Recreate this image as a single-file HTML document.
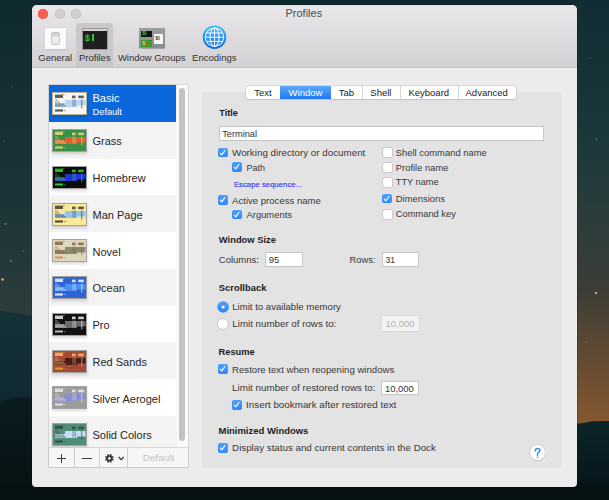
<!DOCTYPE html><html><head><meta charset="utf-8"><style>
*{box-sizing:border-box;margin:0;padding:0}
html,body{width:609px;height:500px;overflow:hidden;background:#1b3539;font-family:"Liberation Sans",sans-serif}
.a{position:absolute}
.t{position:absolute;white-space:nowrap;line-height:1;color:#262626}
.cb{position:absolute;width:9.6px;height:9.6px;border-radius:2px;background:linear-gradient(#4f9ffa,#3088f6)}
.cbo{position:absolute;width:9px;height:9px;border-radius:1.8px;background:#fff;box-shadow:0 0 0 0.8px #c3c3c3}
.fld{position:absolute;background:#fff;box-shadow:0 0 0 0.6px #b8b8b8;font-size:9.8px;color:#222;padding-left:3px}
</style></head><body>
<svg class="a" style="left:0;top:0" width="609" height="500" viewBox="0 0 609 500">
  <defs>
    <linearGradient id="skyL" x1="0" y1="0" x2="0" y2="500" gradientUnits="userSpaceOnUse">
      <stop offset="0" stop-color="#0f2a2e"/>
      <stop offset="0.4" stop-color="#1c3437"/>
      <stop offset="0.62" stop-color="#2c3c3c"/>
    </linearGradient>
    <linearGradient id="skyR" x1="0" y1="0" x2="0" y2="500" gradientUnits="userSpaceOnUse">
      <stop offset="0" stop-color="#122c33"/>
      <stop offset="0.28" stop-color="#1c383b"/>
      <stop offset="0.46" stop-color="#2e3d3b"/>
      <stop offset="0.58" stop-color="#3d3d36"/>
      <stop offset="0.84" stop-color="#84572f"/>
    </linearGradient>
    <linearGradient id="mtL" x1="0" y1="311" x2="0" y2="400" gradientUnits="userSpaceOnUse">
      <stop offset="0" stop-color="#143238"/>
      <stop offset="1" stop-color="#0f2a30"/>
    </linearGradient>
    <linearGradient id="mtR" x1="0" y1="421" x2="0" y2="500" gradientUnits="userSpaceOnUse">
      <stop offset="0" stop-color="#0c2529"/>
      <stop offset="1" stop-color="#06121a"/>
    </linearGradient>
    <linearGradient id="mtD" x1="0" y1="395" x2="0" y2="500" gradientUnits="userSpaceOnUse">
      <stop offset="0" stop-color="#0b1d21"/>
      <stop offset="1" stop-color="#061012"/>
    </linearGradient>
  </defs>
  <rect width="609" height="500" fill="#0f2a2e"/>
  <rect x="0" y="0" width="40" height="500" fill="url(#skyL)"/>
  <rect x="570" y="0" width="39" height="500" fill="url(#skyR)"/>
  <path d="M0 311 L10 312 L33 316 L40 318 L40 500 L0 500Z" fill="url(#mtL)"/>
  <path d="M0 402 L12 398 L25 397 L40 398 L40 500 L0 500Z" fill="url(#mtD)"/>
  <path d="M570 424.5 L580 423.5 L592 421.3 L609 421 L609 500 L570 500Z" fill="url(#mtR)"/>
  <rect x="0" y="484" width="609" height="16" fill="#061113"/>
  <circle cx="2.5" cy="279.5" r="1.3" fill="#e8b890" opacity="0.9"/><circle cx="5.5" cy="224" r="1.0" fill="#9ab4b0" opacity="0.6"/><circle cx="11" cy="261" r="1.0" fill="#9ab4b0" opacity="0.5"/><circle cx="23" cy="251" r="0.9" fill="#b08a9a" opacity="0.4"/><circle cx="12" cy="87" r="0.8" fill="#6a9090" opacity="0.4"/><circle cx="4" cy="141" r="0.8" fill="#6a9090" opacity="0.4"/><circle cx="596" cy="293" r="1.3" fill="#e8a8a0" opacity="0.85"/><circle cx="596.5" cy="139" r="0.9" fill="#8aa8a8" opacity="0.5"/><circle cx="586" cy="342" r="0.8" fill="#b09080" opacity="0.4"/><circle cx="590" cy="58" r="0.8" fill="#6a9090" opacity="0.35"/>
</svg>
<div class="a" style="left:32px;top:5px;width:545px;height:481.5px;background:#ececec;border-radius:5px 5px 4px 4px;overflow:hidden;box-shadow:0 0 0 0.5px rgba(0,0,0,0.35)">
<div class="a" style="left:0;top:0;width:545px;height:63px;background:linear-gradient(#e9e7e9,#d3d1d3);border-bottom:1px solid #c2c0c2;box-shadow:0 1px 0 #f1f1f1"></div>
</div>
<div class="a" style="left:38.0px;top:8.8px;width:10.2px;height:10.2px;border-radius:50%;background:#fc5e52;box-shadow:inset 0 0 0 0.5px #e4483e"></div>
<div class="a" style="left:54.6px;top:8.8px;width:10.2px;height:10.2px;border-radius:50%;background:#d0cfd0;box-shadow:inset 0 0 0 0.5px #bdbcbd"></div>
<div class="a" style="left:70.9px;top:8.8px;width:10.2px;height:10.2px;border-radius:50%;background:#d0cfd0;box-shadow:inset 0 0 0 0.5px #bdbcbd"></div>
<div class="t" style="left:31.3px;width:545px;text-align:center;top:8.4px;font-size:11px;color:#4d4d4d">Profiles</div>
<div class="a" style="left:76.2px;top:23.4px;width:37.2px;height:43.6px;background:#c9c7c9;border-radius:4px 4px 0 0"></div>
<div class="a" style="left:44.9px;top:27.5px;width:21.2px;height:21.6px;background:#fbfbfb;box-shadow:0 0 0 0.6px #d6d6d6,0 1px 1.2px rgba(0,0,0,0.18)"></div>
<div class="a" style="left:52.3px;top:32.5px;width:6.8px;height:11px;background:linear-gradient(#c9c9c9 0,#dedede 35%,#efefef 40%,#e6e6e6 100%);box-shadow:0 0 0 0.7px #b3b3b3;border-radius:0.8px"></div>
<div class="a" style="left:82.6px;top:28.5px;width:24.3px;height:20.4px;background:#1f1f1f;border-top:2.4px solid #d2d2d2;box-shadow:0 0 0 0.5px #6a6a6a"></div>
<div class="t" style="left:84.8px;top:34.6px;font-size:8.6px;font-weight:normal;color:#33c933;-webkit-text-stroke:0.2px #33c933;font-family:'Liberation Mono',monospace">$</div>
<div class="a" style="left:91.5px;top:34.4px;width:2.6px;height:6.4px;background:#33c933"></div>
<div class="a" style="left:138.9px;top:27.9px;width:26.1px;height:20.6px;background:linear-gradient(#9aa0a2,#868c8e);box-shadow:0 0.5px 1px rgba(0,0,0,0.25)"></div>
<div class="a" style="left:140.9px;top:30.6px;width:10.9px;height:6.2px;background:#141414"></div>
<div class="t" style="left:142.3px;top:31.4px;font-size:5px;font-weight:bold;color:#3cc43c">$I</div>
<div class="a" style="left:140.9px;top:39.5px;width:10.9px;height:7.5px;background:#3e9a2c"></div>
<div class="t" style="left:142.3px;top:41px;font-size:5.5px;font-weight:bold;color:#d8d83a">$<span style="color:#d84a3a">I</span></div>
<div class="a" style="left:153.7px;top:33.7px;width:9.7px;height:10.1px;background:#f6f6f6"></div>
<div class="t" style="left:155.3px;top:35.8px;font-size:5.5px;font-weight:bold;color:#444">$I</div>
<svg class="a" style="left:202px;top:25.3px" width="25" height="25" viewBox="0 0 25 25">
 <defs><linearGradient id="gl" x1="0" y1="0" x2="0" y2="1"><stop offset="0" stop-color="#3ec2fd"/><stop offset="1" stop-color="#1766e6"/></linearGradient></defs>
 <circle cx="12.5" cy="12.2" r="11.8" fill="url(#gl)"/>
 <g fill="none" stroke="#fff" stroke-width="1.05" opacity="0.95">
  <circle cx="12.5" cy="12.2" r="9.2"/>
  <ellipse cx="12.5" cy="12.2" rx="4.5" ry="9.2"/>
  <line x1="12.5" y1="3" x2="12.5" y2="21.4"/>
  <line x1="3.3" y1="12.2" x2="21.7" y2="12.2"/>
  <line x1="4.3" y1="8" x2="20.7" y2="8"/>
  <line x1="4.3" y1="16.4" x2="20.7" y2="16.4"/>
 </g>
</svg>
<div class="t" style="left:5.200000000000003px;width:100px;text-align:center;top:52.9px;font-size:9.5px;color:#303030">General</div>
<div class="t" style="left:44.8px;width:100px;text-align:center;top:52.9px;font-size:9.5px;color:#303030">Profiles</div>
<div class="t" style="left:101.69999999999999px;width:100px;text-align:center;top:52.9px;font-size:9.5px;color:#303030">Window Groups</div>
<div class="t" style="left:164.3px;width:100px;text-align:center;top:52.9px;font-size:9.5px;color:#303030">Encodings</div>
<div class="a" style="left:48.7px;top:84.5px;width:139.3px;height:382.9px;background:#fff;box-shadow:0 0 0 0.6px #c4c4c4"></div>
<div class="a" style="left:48.7px;top:85.0px;width:127.10000000000001px;height:36.75px;background:#0a68dc"></div>
<svg class="a" style="left:52px;top:92.25px;filter:drop-shadow(0 2.5px 1.6px rgba(0,0,0,0.15));" width="35" height="23" viewBox="0 0 35 23"><rect width="35" height="23" fill="#b9b19a"/><rect x="1" y="1" width="33" height="21" fill="#f6f7f5"/><path d="M13 8 H33.5 V13.6 H25 V15 H3 V11 H13 Z" fill="#b9d6f6"/><g fill="#3a3a3a" opacity="0.8"><rect x="3" y="2.6" width="8" height="3.4"/><rect x="11" y="2" width="1.6" height="0.8" opacity="0.7"/><rect x="20" y="3.6" width="3.6" height="2.6"/><rect x="26.2" y="3.6" width="5.6" height="2.6"/><rect x="3" y="7.6" width="3" height="0.9" opacity="0.7"/><rect x="3" y="9.6" width="5" height="0.9" opacity="0.7"/><rect x="3" y="11.6" width="9" height="1" opacity="0.8"/><rect x="3" y="13.4" width="11" height="1" opacity="0.8"/><rect x="20.5" y="7.5" width="1" height="7" opacity="0.6"/><rect x="22.5" y="7.5" width="1.2" height="7" opacity="0.6"/><rect x="29" y="7.5" width="1.4" height="9" opacity="0.6"/></g><rect x="3" y="17.5" width="8" height="2" fill="#3a3a3a" opacity="0.9"/><rect x="12.5" y="18" width="1" height="1.2" fill="#3a3a3a" opacity="0.7"/></svg>
<div class="t" style="left:92.5px;top:92.6px;font-size:11px;color:#fff">Basic</div>
<div class="t" style="left:92.5px;top:107.6px;font-size:9.3px;color:#fff">Default</div>
<div class="a" style="left:48.7px;top:121.75px;width:127.10000000000001px;height:36.75px;background:#f3f3f3"></div>
<svg class="a" style="left:52px;top:129.0px;filter:drop-shadow(0 2.5px 1.6px rgba(0,0,0,0.15));" width="35" height="23" viewBox="0 0 35 23"><rect width="35" height="23" fill="#a2a2a2"/><rect x="1" y="1" width="33" height="21" fill="#3b8f48"/><path d="M13 8 H33.5 V13.6 H25 V15 H3 V11 H13 Z" fill="#dc6230"/><g fill="#f2e27a" opacity="0.8"><rect x="3" y="2.6" width="8" height="3.4"/><rect x="11" y="2" width="1.6" height="0.8" opacity="0.7"/><rect x="20" y="3.6" width="3.6" height="2.6"/><rect x="26.2" y="3.6" width="5.6" height="2.6"/><rect x="3" y="7.6" width="3" height="0.9" opacity="0.7"/><rect x="3" y="9.6" width="5" height="0.9" opacity="0.7"/><rect x="3" y="11.6" width="9" height="1" opacity="0.8"/><rect x="3" y="13.4" width="11" height="1" opacity="0.8"/><rect x="20.5" y="7.5" width="1" height="7" opacity="0.6"/><rect x="22.5" y="7.5" width="1.2" height="7" opacity="0.6"/><rect x="29" y="7.5" width="1.4" height="9" opacity="0.6"/></g><rect x="3" y="17.5" width="8" height="2" fill="#e8d86a" opacity="0.9"/><rect x="12.5" y="18" width="1" height="1.2" fill="#e8d86a" opacity="0.7"/></svg>
<div class="t" style="left:92.5px;top:136.25px;font-size:11px;color:#262626">Grass</div>
<div class="a" style="left:48.7px;top:158.5px;width:127.10000000000001px;height:36.75px;background:#ffffff"></div>
<svg class="a" style="left:52px;top:165.75px;filter:drop-shadow(0 2.5px 1.6px rgba(0,0,0,0.15));" width="35" height="23" viewBox="0 0 35 23"><rect width="35" height="23" fill="#a2a2a2"/><rect x="1" y="1" width="33" height="21" fill="#0b0b0b"/><path d="M13 8 H33.5 V13.6 H25 V15 H3 V11 H13 Z" fill="#2233d6"/><g fill="#2ee82e" opacity="0.8"><rect x="3" y="2.6" width="8" height="3.4"/><rect x="11" y="2" width="1.6" height="0.8" opacity="0.7"/><rect x="20" y="3.6" width="3.6" height="2.6"/><rect x="26.2" y="3.6" width="5.6" height="2.6"/><rect x="3" y="7.6" width="3" height="0.9" opacity="0.7"/><rect x="3" y="9.6" width="5" height="0.9" opacity="0.7"/><rect x="3" y="11.6" width="9" height="1" opacity="0.8"/><rect x="3" y="13.4" width="11" height="1" opacity="0.8"/><rect x="20.5" y="7.5" width="1" height="7" opacity="0.6"/><rect x="22.5" y="7.5" width="1.2" height="7" opacity="0.6"/><rect x="29" y="7.5" width="1.4" height="9" opacity="0.6"/></g><rect x="3" y="17.5" width="8" height="2" fill="#2ee82e" opacity="0.9"/><rect x="12.5" y="18" width="1" height="1.2" fill="#2ee82e" opacity="0.7"/></svg>
<div class="t" style="left:92.5px;top:173.0px;font-size:11px;color:#262626">Homebrew</div>
<div class="a" style="left:48.7px;top:195.25px;width:127.10000000000001px;height:36.75px;background:#f3f3f3"></div>
<svg class="a" style="left:52px;top:202.5px;filter:drop-shadow(0 2.5px 1.6px rgba(0,0,0,0.15));" width="35" height="23" viewBox="0 0 35 23"><rect width="35" height="23" fill="#a2a2a2"/><rect x="1" y="1" width="33" height="21" fill="#f7ea98"/><path d="M13 8 H33.5 V13.6 H25 V15 H3 V11 H13 Z" fill="#94c4ee"/><g fill="#333333" opacity="0.8"><rect x="3" y="2.6" width="8" height="3.4"/><rect x="11" y="2" width="1.6" height="0.8" opacity="0.7"/><rect x="20" y="3.6" width="3.6" height="2.6"/><rect x="26.2" y="3.6" width="5.6" height="2.6"/><rect x="3" y="7.6" width="3" height="0.9" opacity="0.7"/><rect x="3" y="9.6" width="5" height="0.9" opacity="0.7"/><rect x="3" y="11.6" width="9" height="1" opacity="0.8"/><rect x="3" y="13.4" width="11" height="1" opacity="0.8"/><rect x="20.5" y="7.5" width="1" height="7" opacity="0.6"/><rect x="22.5" y="7.5" width="1.2" height="7" opacity="0.6"/><rect x="29" y="7.5" width="1.4" height="9" opacity="0.6"/></g><rect x="3" y="17.5" width="8" height="2" fill="#333333" opacity="0.9"/><rect x="12.5" y="18" width="1" height="1.2" fill="#333333" opacity="0.7"/></svg>
<div class="t" style="left:92.5px;top:209.75px;font-size:11px;color:#262626">Man Page</div>
<div class="a" style="left:48.7px;top:232.0px;width:127.10000000000001px;height:36.75px;background:#ffffff"></div>
<svg class="a" style="left:52px;top:239.25px;filter:drop-shadow(0 2.5px 1.6px rgba(0,0,0,0.15));" width="35" height="23" viewBox="0 0 35 23"><rect width="35" height="23" fill="#a2a2a2"/><rect x="1" y="1" width="33" height="21" fill="#dcd7bf"/><path d="M13 8 H33.5 V13.6 H25 V15 H3 V11 H13 Z" fill="#8c8a6a"/><g fill="#8a5a3e" opacity="0.8"><rect x="3" y="2.6" width="8" height="3.4"/><rect x="11" y="2" width="1.6" height="0.8" opacity="0.7"/><rect x="20" y="3.6" width="3.6" height="2.6"/><rect x="26.2" y="3.6" width="5.6" height="2.6"/><rect x="3" y="7.6" width="3" height="0.9" opacity="0.7"/><rect x="3" y="9.6" width="5" height="0.9" opacity="0.7"/><rect x="3" y="11.6" width="9" height="1" opacity="0.8"/><rect x="3" y="13.4" width="11" height="1" opacity="0.8"/><rect x="20.5" y="7.5" width="1" height="7" opacity="0.6"/><rect x="22.5" y="7.5" width="1.2" height="7" opacity="0.6"/><rect x="29" y="7.5" width="1.4" height="9" opacity="0.6"/></g><rect x="3" y="17.5" width="8" height="2" fill="#cf8a5a" opacity="0.9"/><rect x="12.5" y="18" width="1" height="1.2" fill="#cf8a5a" opacity="0.7"/></svg>
<div class="t" style="left:92.5px;top:246.5px;font-size:11px;color:#262626">Novel</div>
<div class="a" style="left:48.7px;top:268.75px;width:127.10000000000001px;height:36.75px;background:#f3f3f3"></div>
<svg class="a" style="left:52px;top:276.0px;filter:drop-shadow(0 2.5px 1.6px rgba(0,0,0,0.15));" width="35" height="23" viewBox="0 0 35 23"><rect width="35" height="23" fill="#a2a2a2"/><rect x="1" y="1" width="33" height="21" fill="#2c64d2"/><path d="M13 8 H33.5 V13.6 H25 V15 H3 V11 H13 Z" fill="#4a8ef2"/><g fill="#ffffff" opacity="0.8"><rect x="3" y="2.6" width="8" height="3.4"/><rect x="11" y="2" width="1.6" height="0.8" opacity="0.7"/><rect x="20" y="3.6" width="3.6" height="2.6"/><rect x="26.2" y="3.6" width="5.6" height="2.6"/><rect x="3" y="7.6" width="3" height="0.9" opacity="0.7"/><rect x="3" y="9.6" width="5" height="0.9" opacity="0.7"/><rect x="3" y="11.6" width="9" height="1" opacity="0.8"/><rect x="3" y="13.4" width="11" height="1" opacity="0.8"/><rect x="20.5" y="7.5" width="1" height="7" opacity="0.6"/><rect x="22.5" y="7.5" width="1.2" height="7" opacity="0.6"/><rect x="29" y="7.5" width="1.4" height="9" opacity="0.6"/></g><rect x="3" y="17.5" width="8" height="2" fill="#ffffff" opacity="0.9"/><rect x="12.5" y="18" width="1" height="1.2" fill="#ffffff" opacity="0.7"/></svg>
<div class="t" style="left:92.5px;top:283.25px;font-size:11px;color:#262626">Ocean</div>
<div class="a" style="left:48.7px;top:305.5px;width:127.10000000000001px;height:36.75px;background:#ffffff"></div>
<svg class="a" style="left:52px;top:312.75px;filter:drop-shadow(0 2.5px 1.6px rgba(0,0,0,0.15));" width="35" height="23" viewBox="0 0 35 23"><rect width="35" height="23" fill="#a2a2a2"/><rect x="1" y="1" width="33" height="21" fill="#121212"/><path d="M13 8 H33.5 V13.6 H25 V15 H3 V11 H13 Z" fill="#6a6a6a"/><g fill="#ffffff" opacity="0.8"><rect x="3" y="2.6" width="8" height="3.4"/><rect x="11" y="2" width="1.6" height="0.8" opacity="0.7"/><rect x="20" y="3.6" width="3.6" height="2.6"/><rect x="26.2" y="3.6" width="5.6" height="2.6"/><rect x="3" y="7.6" width="3" height="0.9" opacity="0.7"/><rect x="3" y="9.6" width="5" height="0.9" opacity="0.7"/><rect x="3" y="11.6" width="9" height="1" opacity="0.8"/><rect x="3" y="13.4" width="11" height="1" opacity="0.8"/><rect x="20.5" y="7.5" width="1" height="7" opacity="0.6"/><rect x="22.5" y="7.5" width="1.2" height="7" opacity="0.6"/><rect x="29" y="7.5" width="1.4" height="9" opacity="0.6"/></g><rect x="3" y="17.5" width="8" height="2" fill="#cccccc" opacity="0.9"/><rect x="12.5" y="18" width="1" height="1.2" fill="#cccccc" opacity="0.7"/></svg>
<div class="t" style="left:92.5px;top:320.0px;font-size:11px;color:#262626">Pro</div>
<div class="a" style="left:48.7px;top:342.25px;width:127.10000000000001px;height:36.75px;background:#f3f3f3"></div>
<svg class="a" style="left:52px;top:349.5px;filter:drop-shadow(0 2.5px 1.6px rgba(0,0,0,0.15));" width="35" height="23" viewBox="0 0 35 23"><rect width="35" height="23" fill="#a2a2a2"/><rect x="1" y="1" width="33" height="21" fill="#a64a38"/><path d="M13 8 H33.5 V13.6 H25 V15 H3 V11 H13 Z" fill="#4a1c18"/><g fill="#f6c86a" opacity="0.8"><rect x="3" y="2.6" width="8" height="3.4"/><rect x="11" y="2" width="1.6" height="0.8" opacity="0.7"/><rect x="20" y="3.6" width="3.6" height="2.6"/><rect x="26.2" y="3.6" width="5.6" height="2.6"/><rect x="3" y="7.6" width="3" height="0.9" opacity="0.7"/><rect x="3" y="9.6" width="5" height="0.9" opacity="0.7"/><rect x="3" y="11.6" width="9" height="1" opacity="0.8"/><rect x="3" y="13.4" width="11" height="1" opacity="0.8"/><rect x="20.5" y="7.5" width="1" height="7" opacity="0.6"/><rect x="22.5" y="7.5" width="1.2" height="7" opacity="0.6"/><rect x="29" y="7.5" width="1.4" height="9" opacity="0.6"/></g><rect x="3" y="17.5" width="8" height="2" fill="#eaa22a" opacity="0.9"/><rect x="12.5" y="18" width="1" height="1.2" fill="#eaa22a" opacity="0.7"/></svg>
<div class="t" style="left:92.5px;top:356.75px;font-size:11px;color:#262626">Red Sands</div>
<div class="a" style="left:48.7px;top:379.0px;width:127.10000000000001px;height:36.75px;background:#ffffff"></div>
<svg class="a" style="left:52px;top:386.25px;filter:drop-shadow(0 2.5px 1.6px rgba(0,0,0,0.15));" width="35" height="23" viewBox="0 0 35 23"><rect width="35" height="23" fill="#a2a2a2"/><rect x="1" y="1" width="33" height="21" fill="#9c9c9c"/><path d="M13 8 H33.5 V13.6 H25 V15 H3 V11 H13 Z" fill="#8a8cd0"/><g fill="#f0f0f0" opacity="0.8"><rect x="3" y="2.6" width="8" height="3.4"/><rect x="11" y="2" width="1.6" height="0.8" opacity="0.7"/><rect x="20" y="3.6" width="3.6" height="2.6"/><rect x="26.2" y="3.6" width="5.6" height="2.6"/><rect x="3" y="7.6" width="3" height="0.9" opacity="0.7"/><rect x="3" y="9.6" width="5" height="0.9" opacity="0.7"/><rect x="3" y="11.6" width="9" height="1" opacity="0.8"/><rect x="3" y="13.4" width="11" height="1" opacity="0.8"/><rect x="20.5" y="7.5" width="1" height="7" opacity="0.6"/><rect x="22.5" y="7.5" width="1.2" height="7" opacity="0.6"/><rect x="29" y="7.5" width="1.4" height="9" opacity="0.6"/></g><rect x="3" y="17.5" width="8" height="2" fill="#e8e8e8" opacity="0.9"/><rect x="12.5" y="18" width="1" height="1.2" fill="#e8e8e8" opacity="0.7"/></svg>
<div class="t" style="left:92.5px;top:393.5px;font-size:11px;color:#262626">Silver Aerogel</div>
<div class="a" style="left:48.7px;top:415.75px;width:127.10000000000001px;height:32.25px;background:#f3f3f3"></div>
<svg class="a" style="left:52px;top:423.0px;filter:drop-shadow(0 2.5px 1.6px rgba(0,0,0,0.15));" width="35" height="23" viewBox="0 0 35 23"><rect width="35" height="23" fill="#a2a2a2"/><rect x="1" y="1" width="33" height="21" fill="#4f8d79"/><path d="M13 8 H33.5 V13.6 H25 V15 H3 V11 H13 Z" fill="#c4def8"/><g fill="#2a4a40" opacity="0.8"><rect x="3" y="2.6" width="8" height="3.4"/><rect x="11" y="2" width="1.6" height="0.8" opacity="0.7"/><rect x="20" y="3.6" width="3.6" height="2.6"/><rect x="26.2" y="3.6" width="5.6" height="2.6"/><rect x="3" y="7.6" width="3" height="0.9" opacity="0.7"/><rect x="3" y="9.6" width="5" height="0.9" opacity="0.7"/><rect x="3" y="11.6" width="9" height="1" opacity="0.8"/><rect x="3" y="13.4" width="11" height="1" opacity="0.8"/><rect x="20.5" y="7.5" width="1" height="7" opacity="0.6"/><rect x="22.5" y="7.5" width="1.2" height="7" opacity="0.6"/><rect x="29" y="7.5" width="1.4" height="9" opacity="0.6"/></g><rect x="3" y="17.5" width="8" height="2" fill="#2a4a40" opacity="0.9"/><rect x="12.5" y="18" width="1" height="1.2" fill="#2a4a40" opacity="0.7"/></svg>
<div class="t" style="left:92.5px;top:430.25px;font-size:11px;color:#262626">Solid Colors</div>
<div class="a" style="left:175.8px;top:84.5px;width:12.199999999999989px;height:363.5px;background:#fafafa;box-shadow:inset 0.6px 0 0 #eeeeee"></div>
<div class="a" style="left:179px;top:87.8px;width:6.2px;height:353.5px;border-radius:3.1px;background:#c3c3c3"></div>
<div class="a" style="left:48.7px;top:448px;width:139.3px;height:19.399999999999977px;background:#f6f6f6;box-shadow:0 0 0 0.6px #c4c4c4"></div>
<div class="a" style="left:73.8px;top:448px;width:0.8px;height:19.399999999999977px;background:#cfcfcf"></div>
<div class="a" style="left:99.1px;top:448px;width:0.8px;height:19.399999999999977px;background:#cfcfcf"></div>
<div class="a" style="left:127px;top:448px;width:0.8px;height:19.399999999999977px;background:#cfcfcf"></div>
<div class="a" style="left:57px;top:458.1px;width:9.4px;height:1.1px;background:#3a3a3a"></div>
<div class="a" style="left:61.2px;top:453.6px;width:1px;height:9.4px;background:#3a3a3a"></div>
<div class="a" style="left:82.4px;top:458.1px;width:9.4px;height:1.1px;background:#3a3a3a"></div>
<svg class="a" style="left:104.1px;top:452.8px" width="10.8" height="10.8" viewBox="0 0 12 12"><path fill-rule="evenodd" d="M9.60 6.00 L9.56 6.51 L10.88 7.09 L10.22 8.68 L8.88 8.16 L8.55 8.55 L8.16 8.88 L8.68 10.22 L7.09 10.88 L6.51 9.56 L6.00 9.60 L5.49 9.56 L4.91 10.88 L3.32 10.22 L3.84 8.88 L3.45 8.55 L3.12 8.16 L1.78 8.68 L1.12 7.09 L2.44 6.51 L2.40 6.00 L2.44 5.49 L1.12 4.91 L1.78 3.32 L3.12 3.84 L3.45 3.45 L3.84 3.12 L3.32 1.78 L4.91 1.12 L5.49 2.44 L6.00 2.40 L6.51 2.44 L7.09 1.12 L8.68 1.78 L8.16 3.12 L8.55 3.45 L8.88 3.84 L10.22 3.32 L10.88 4.91 L9.56 5.49Z M7.5 6 A1.5 1.5 0 1 0 4.5 6 A1.5 1.5 0 1 0 7.5 6Z" fill="#333"/></svg>
<svg class="a" style="left:118.3px;top:455.8px" width="6.4" height="5" viewBox="0 0 6.4 5"><path d="M0.7 1 L3.2 3.6 L5.7 1" fill="none" stroke="#333" stroke-width="1.25"/></svg>
<div class="t" style="left:128.5px;width:60px;text-align:center;top:453px;font-size:9.9px;color:#c4c4c4">Default</div>
<div class="a" style="left:202.9px;top:92.8px;width:357.3px;height:374.5px;background:#e3e3e3;border-radius:2.5px;box-shadow:0 0 0 0.6px #d6d6d6"></div>
<div class="a" style="left:246px;top:85.7px;width:269.8px;height:13.8px;background:#fff;border-radius:3px;box-shadow:0 0 0 0.6px #c6c6c6,0 0.6px 1px rgba(0,0,0,0.15)"></div>
<div class="t" style="left:246px;width:34px;text-align:center;top:88px;font-size:9.5px;color:#222">Text</div>
<div class="a" style="left:280px;top:85.7px;width:51px;height:13.8px;background:linear-gradient(#5ba8fa,#1f78f3)"></div>
<div class="t" style="left:280px;width:51px;text-align:center;top:88px;font-size:9.5px;color:#fff">Window</div>
<div class="t" style="left:331px;width:30.80000000000001px;text-align:center;top:88px;font-size:9.5px;color:#222">Tab</div>
<div class="a" style="left:361.8px;top:85.7px;width:0.7px;height:13.8px;background:#d6d6d6"></div>
<div class="t" style="left:361.8px;width:38.19999999999999px;text-align:center;top:88px;font-size:9.5px;color:#222">Shell</div>
<div class="a" style="left:400px;top:85.7px;width:0.7px;height:13.8px;background:#d6d6d6"></div>
<div class="t" style="left:400px;width:57.5px;text-align:center;top:88px;font-size:9.5px;color:#222">Keyboard</div>
<div class="a" style="left:457.5px;top:85.7px;width:0.7px;height:13.8px;background:#d6d6d6"></div>
<div class="t" style="left:457.5px;width:58.299999999999955px;text-align:center;top:88px;font-size:9.5px;color:#222">Advanced</div>
<div class="t" style="left:219.3px;top:108.98px;font-size:9.17px;font-weight:700;color:#1c1c1c;">Title</div>
<div class="a" style="left:218.6px;top:125.7px;width:325.4px;height:14.899999999999991px;background:#fff;box-shadow:inset 0 0 0 0.9px #c4c4c4;"></div>
<div class="t" style="left:222.2px;top:129.60px;font-size:9.21px;font-weight:400;color:#333;">Terminal</div>
<div class="cb" style="left:218.4px;top:147.6px"></div>
<svg class="a" style="left:218.4px;top:147.6px" width="9.6" height="9.6" viewBox="0 0 10 10"><path d="M2.3 5.3 L3.9 7.1 L7.2 2.6" fill="none" stroke="#fff" stroke-width="1.2" stroke-linecap="round" stroke-linejoin="round"/></svg>
<div class="t" style="left:232.1px;top:147.81px;font-size:9.8px;font-weight:400;color:#383838;">Working directory or document</div>
<div class="cb" style="left:232.2px;top:162.39999999999998px"></div>
<svg class="a" style="left:232.2px;top:162.39999999999998px" width="9.6" height="9.6" viewBox="0 0 10 10"><path d="M2.3 5.3 L3.9 7.1 L7.2 2.6" fill="none" stroke="#fff" stroke-width="1.2" stroke-linecap="round" stroke-linejoin="round"/></svg>
<div class="t" style="left:246.5px;top:163.63px;font-size:8.94px;font-weight:400;color:#383838;">Path</div>
<div class="t" style="left:233.9px;top:180.99px;font-size:7.78px;font-weight:400;color:#3b3bf0;-webkit-text-stroke:0.15px #3b3bf0">Escape sequence...</div>
<div class="cb" style="left:218.4px;top:195.0px"></div>
<svg class="a" style="left:218.4px;top:195.0px" width="9.6" height="9.6" viewBox="0 0 10 10"><path d="M2.3 5.3 L3.9 7.1 L7.2 2.6" fill="none" stroke="#fff" stroke-width="1.2" stroke-linecap="round" stroke-linejoin="round"/></svg>
<div class="t" style="left:232.1px;top:195.70px;font-size:9.57px;font-weight:400;color:#383838;">Active process name</div>
<div class="cb" style="left:232.2px;top:209.79999999999998px"></div>
<svg class="a" style="left:232.2px;top:209.79999999999998px" width="9.6" height="9.6" viewBox="0 0 10 10"><path d="M2.3 5.3 L3.9 7.1 L7.2 2.6" fill="none" stroke="#fff" stroke-width="1.2" stroke-linecap="round" stroke-linejoin="round"/></svg>
<div class="t" style="left:246.5px;top:209.93px;font-size:9.41px;font-weight:400;color:#383838;">Arguments</div>
<div class="cbo" style="left:382.7px;top:148.4px"></div>
<div class="t" style="left:395.8px;top:148.43px;font-size:9.41px;font-weight:400;color:#383838;">Shell command name</div>
<div class="cbo" style="left:382.7px;top:163.0px"></div>
<div class="t" style="left:395.8px;top:163.24px;font-size:9.4px;font-weight:400;color:#383838;">Profile name</div>
<div class="cbo" style="left:382.7px;top:177.5px"></div>
<div class="t" style="left:395.8px;top:178.18px;font-size:9.23px;font-weight:400;color:#383838;">TTY name</div>
<div class="cb" style="left:382.4px;top:193.7px"></div>
<svg class="a" style="left:382.4px;top:193.7px" width="9.6" height="9.6" viewBox="0 0 10 10"><path d="M2.3 5.3 L3.9 7.1 L7.2 2.6" fill="none" stroke="#fff" stroke-width="1.2" stroke-linecap="round" stroke-linejoin="round"/></svg>
<div class="t" style="left:395.8px;top:193.83px;font-size:9.42px;font-weight:400;color:#383838;">Dimensions</div>
<div class="cbo" style="left:382.7px;top:210.2px"></div>
<div class="t" style="left:395.8px;top:210.21px;font-size:9.32px;font-weight:400;color:#383838;">Command key</div>
<div class="t" style="left:218.8px;top:235.20px;font-size:9.39px;font-weight:700;color:#1c1c1c;">Window Size</div>
<div class="t" style="left:218.8px;top:254.99px;font-size:9.47px;font-weight:400;color:#383838;">Columns:</div>
<div class="a" style="left:265.1px;top:251.8px;width:37.799999999999955px;height:14.899999999999977px;background:#fff;box-shadow:inset 0 0 0 0.9px #c4c4c4;"></div>
<div class="t" style="left:268.70000000000005px;top:255.21px;font-size:9.44px;font-weight:400;color:#333;">95</div>
<div class="t" style="left:349.5px;top:255.71px;font-size:9.32px;font-weight:400;color:#383838;">Rows:</div>
<div class="a" style="left:381.8px;top:251.8px;width:37.39999999999998px;height:14.899999999999977px;background:#fff;box-shadow:inset 0 0 0 0.9px #c4c4c4;"></div>
<div class="t" style="left:385.40000000000003px;top:255.96px;font-size:8.54px;font-weight:400;color:#333;">31</div>
<div class="t" style="left:218.8px;top:282.78px;font-size:9.41px;font-weight:700;color:#1c1c1c;">Scrollback</div>
<svg class="a" style="left:216px;top:300px" width="14" height="14" viewBox="0 0 14 14"><defs><linearGradient id="rg" x1="0" y1="0" x2="0" y2="1"><stop offset="0" stop-color="#4e9ffa"/><stop offset="1" stop-color="#2f86f6"/></linearGradient></defs><circle cx="7.1" cy="7" r="5.8" fill="url(#rg)"/><circle cx="7.1" cy="7" r="1.6" fill="#fff"/></svg>
<div class="t" style="left:232.3px;top:302.49px;font-size:9.58px;font-weight:400;color:#383838;">Limit to available memory</div>
<svg class="a" style="left:216px;top:316.7px" width="14" height="14" viewBox="0 0 14 14"><circle cx="6.9" cy="7" r="5.45" fill="#fff" stroke="#b9b9b9" stroke-width="0.75"/></svg>
<div class="t" style="left:232.3px;top:318.95px;font-size:9.75px;font-weight:400;color:#383838;">Limit number of rows to:</div>
<div class="a" style="left:382px;top:315.5px;width:37.2px;height:15.2px;background:#f3f3f3;box-shadow:0 0 0 0.6px #d4d4d4"></div>
<div class="t" style="left:385.6px;top:319.38px;font-size:9.48px;font-weight:400;color:#b3b3b3;">10,000</div>
<div class="t" style="left:218.5px;top:347.85px;font-size:9.33px;font-weight:700;color:#1c1c1c;">Resume</div>
<div class="cb" style="left:218.4px;top:364.4px"></div>
<svg class="a" style="left:218.4px;top:364.4px" width="9.6" height="9.6" viewBox="0 0 10 10"><path d="M2.3 5.3 L3.9 7.1 L7.2 2.6" fill="none" stroke="#fff" stroke-width="1.2" stroke-linecap="round" stroke-linejoin="round"/></svg>
<div class="t" style="left:232.1px;top:364.87px;font-size:9.61px;font-weight:400;color:#383838;">Restore text when reopening windows</div>
<div class="t" style="left:232.1px;top:383.39px;font-size:9.82px;font-weight:400;color:#383838;">Limit number of restored rows to:</div>
<div class="a" style="left:381.3px;top:380.8px;width:37.69999999999999px;height:14.699999999999989px;background:#fff;box-shadow:inset 0 0 0 0.9px #c4c4c4;"></div>
<div class="t" style="left:384.90000000000003px;top:384.08px;font-size:9.48px;font-weight:400;color:#333;">10,000</div>
<div class="cb" style="left:232.2px;top:400.0px"></div>
<svg class="a" style="left:232.2px;top:400.0px" width="9.6" height="9.6" viewBox="0 0 10 10"><path d="M2.3 5.3 L3.9 7.1 L7.2 2.6" fill="none" stroke="#fff" stroke-width="1.2" stroke-linecap="round" stroke-linejoin="round"/></svg>
<div class="t" style="left:246.1px;top:400.19px;font-size:9.83px;font-weight:400;color:#383838;">Insert bookmark after restored text</div>
<div class="t" style="left:218.5px;top:425.84px;font-size:9.47px;font-weight:700;color:#1c1c1c;">Minimized Windows</div>
<div class="cb" style="left:218.4px;top:443.2px"></div>
<svg class="a" style="left:218.4px;top:443.2px" width="9.6" height="9.6" viewBox="0 0 10 10"><path d="M2.3 5.3 L3.9 7.1 L7.2 2.6" fill="none" stroke="#fff" stroke-width="1.2" stroke-linecap="round" stroke-linejoin="round"/></svg>
<div class="t" style="left:232.1px;top:443.44px;font-size:9.76px;font-weight:400;color:#383838;">Display status and current contents in the Dock</div>
<div class="a" style="left:530.2px;top:445.4px;width:14.4px;height:14.4px;border-radius:50%;background:#fff;box-shadow:0 0 0 0.6px #c2c2c2,0 0.8px 1px rgba(0,0,0,0.15)"></div>
<svg class="a" style="left:530px;top:445px" width="15" height="15" viewBox="530 445 15 15"><path d="M535.2 451 C535.2 449.3 536.2 448.4 537.5 448.4 C538.9 448.4 539.9 449.3 539.9 450.5 C539.9 451.7 539.1 452.2 538.3 452.7 C537.7 453.1 537.5 453.5 537.5 454.3 L537.5 455.2" fill="none" stroke="#3a8ff5" stroke-width="1.5" stroke-linecap="round"/><circle cx="537.5" cy="457.3" r="0.8" fill="#3a8ff5"/></svg>
</body></html>
